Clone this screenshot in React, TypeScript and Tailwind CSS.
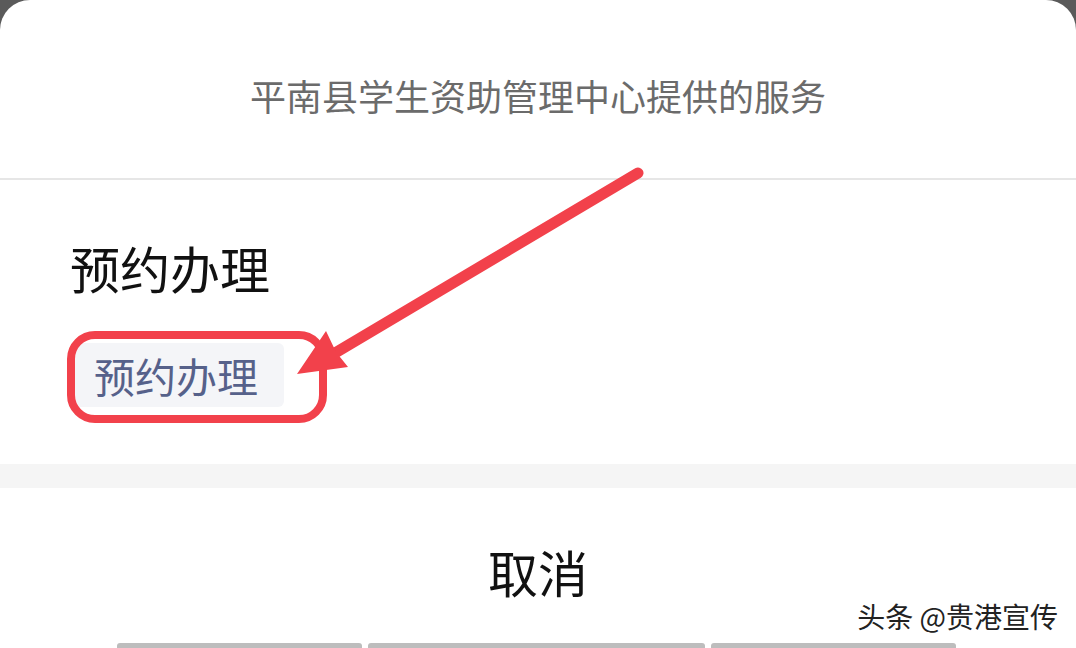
const CJK = "font-['Noto_Sans_CJK_SC','Noto_Sans',sans-serif]";

function Annotation() {
  return (
    <svg
      className="pointer-events-none absolute left-0 top-0"
      width={1076}
      height={648}
      viewBox="0 0 1076 648"
    >
      <rect
        x={71}
        y={335}
        width={252}
        height={84}
        rx={24}
        fill="none"
        stroke="#f2414b"
        strokeWidth={8}
      />
      <line
        x1={638}
        y1={173}
        x2={330}
        y2={356}
        stroke="#f2414b"
        strokeWidth={11}
        strokeLinecap="round"
      />
      <polygon points="326,331 336,352 348,367 297,374" fill="#f2414b" />
    </svg>
  );
}

export default function App() {
  return (
    <div className={`relative h-[648px] w-[1076px] overflow-hidden bg-[#5a5a5a] ${CJK}`}>
      <div className="flex h-full flex-col rounded-t-[30px] bg-white">
        <div className="flex h-[180px] items-center justify-center border-b-2 border-[#e6e6e6] pt-[12px]">
          <span className="text-[36px] leading-none text-[#6b6b6b]">
            平南县学生资助管理中心提供的服务
          </span>
        </div>

        <div className="flex flex-col items-start px-[70px] pb-[57px] pt-[62px]">
          <h2 className="text-[50px] font-normal leading-none text-[#111]">预约办理</h2>
          <button
            type="button"
            className="mt-[51px] flex h-[64px] items-center rounded-[6px] bg-[#f4f5f8] pl-[24px] pr-[26px] text-[41px] leading-none text-[#56618a]"
          >
            预约办理
          </button>
        </div>

        <div className="h-[24px] bg-[#f5f5f5]" />

        <div className="flex flex-1 justify-center pt-[58px]">
          <span className="text-[50px] leading-none text-[#111]">取消</span>
        </div>

        <div className="flex h-[5px] gap-[6px] pl-[117px]">
          <div className="w-[245px] rounded-t-[3px] bg-[#bdbdbd]" />
          <div className="w-[337px] rounded-t-[3px] bg-[#bdbdbd]" />
          <div className="w-[245px] rounded-t-[3px] bg-[#bdbdbd]" />
        </div>
      </div>

      <Annotation />

      <div className="absolute bottom-[18px] right-[18px] text-[28px] leading-none text-[#222] [text-shadow:1px_1px_0_#fff,-1px_-1px_0_#fff]">
        头条 @贵港宣传
      </div>
    </div>
  );
}
